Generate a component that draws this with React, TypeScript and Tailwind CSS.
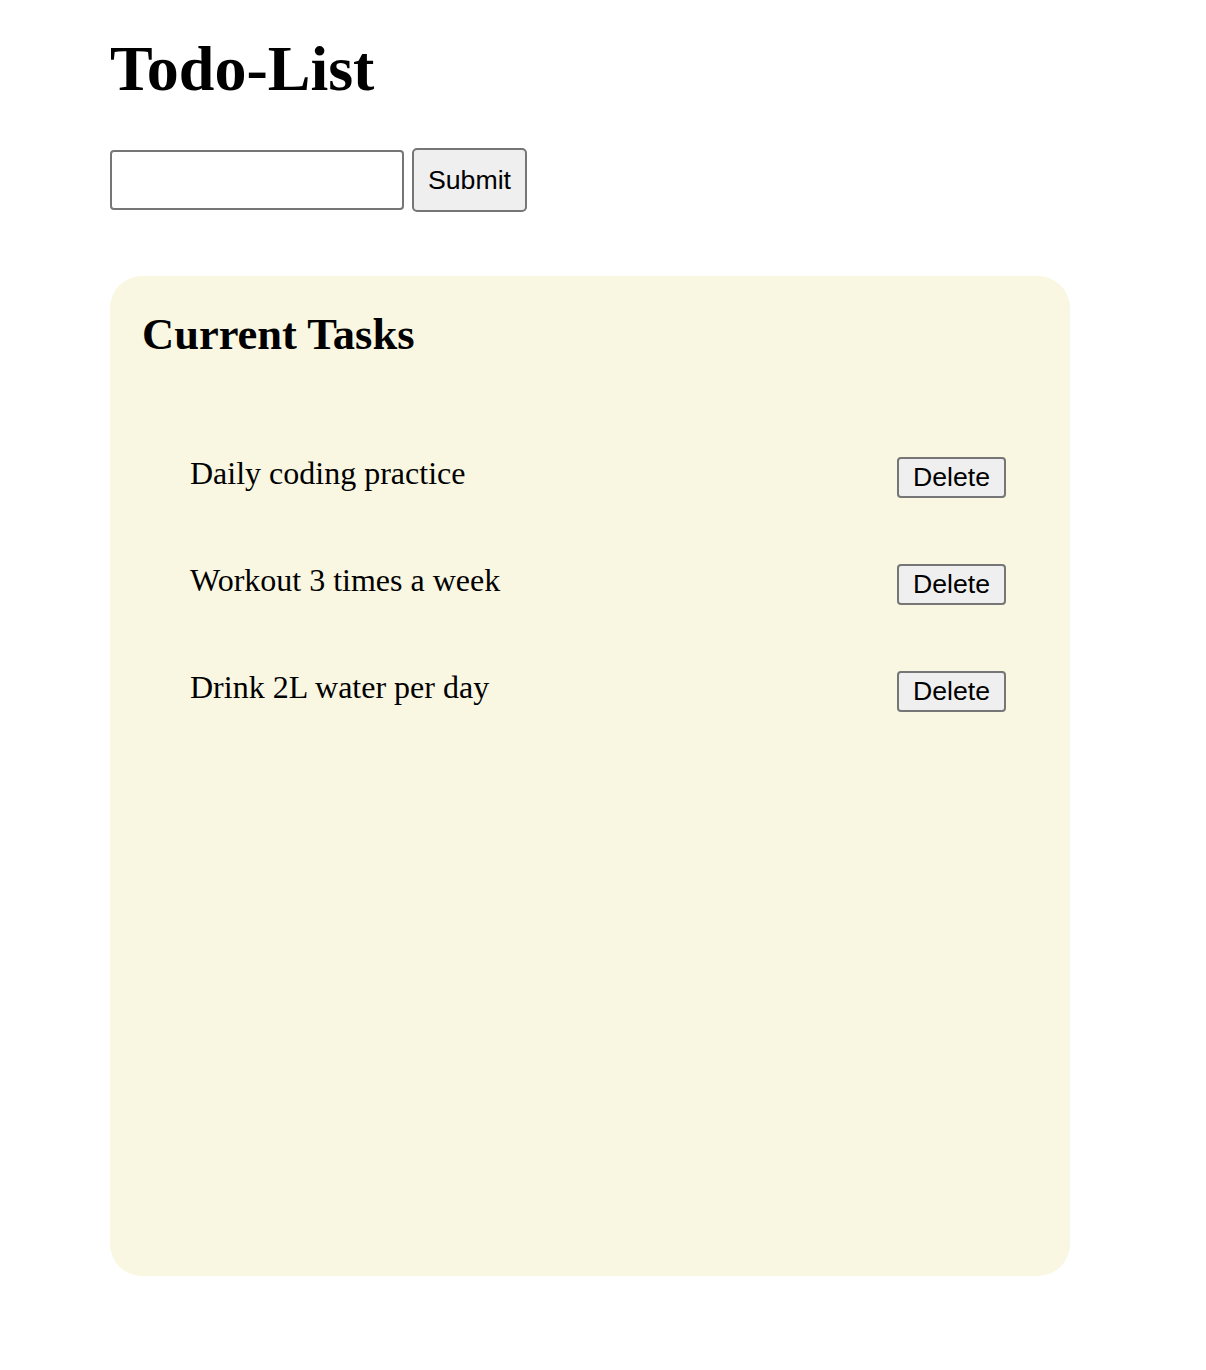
import { useState } from "react";

const serif = "font-['Liberation_Serif','Times_New_Roman',serif]";
const sans = "font-['Liberation_Sans',Arial,sans-serif]";

export default function App() {
  const [text, setText] = useState("");
  const [tasks, setTasks] = useState([
    "Daily coding practice",
    "Workout 3 times a week",
    "Drink 2L water per day",
  ]);

  const addTask = () => {
    if (!text.trim()) return;
    setTasks([...tasks, text.trim()]);
    setText("");
  };

  return (
    <div className={`min-h-[1370px] bg-white pl-[110px] pt-[37px] text-black ${serif}`}>
      <h1 className="text-[64px] font-bold leading-none">Todo-List</h1>

      <div className="mt-[47px] flex items-center gap-[8px]">
        <input
          value={text}
          onChange={(e) => setText(e.target.value)}
          className="h-[60px] w-[294px] rounded-[4px] border-2 border-[#767676] bg-white px-[4px] text-[26px] outline-none"
        />
        <button
          onClick={addTask}
          className={`h-[64px] w-[115px] rounded-[5px] border-2 border-[#767676] bg-[#efefef] text-[26.67px] ${sans}`}
        >
          Submit
        </button>
      </div>

      <div className="mt-[64px] h-[1000px] w-[960px] rounded-[32px] bg-[#f9f7e1] pl-[32px] pr-[64px] pt-[36px]">
        <h2 className="text-[44.5px] font-bold leading-none">Current Tasks</h2>

        <ul className="mt-[100px] flex flex-col gap-[66px] pl-[48px]">
          {tasks.map((t, i) => (
            <li key={i} className="flex items-start justify-between">
              <span className="text-[32px] leading-none">{t}</span>
              <button
                onClick={() => setTasks(tasks.filter((_, j) => j !== i))}
                className={`h-[41px] w-[109px] rounded-[4px] border-2 border-[#767676] bg-[#efefef] text-[26.67px] leading-none ${sans}`}
              >
                Delete
              </button>
            </li>
          ))}
        </ul>
      </div>
    </div>
  );
}
